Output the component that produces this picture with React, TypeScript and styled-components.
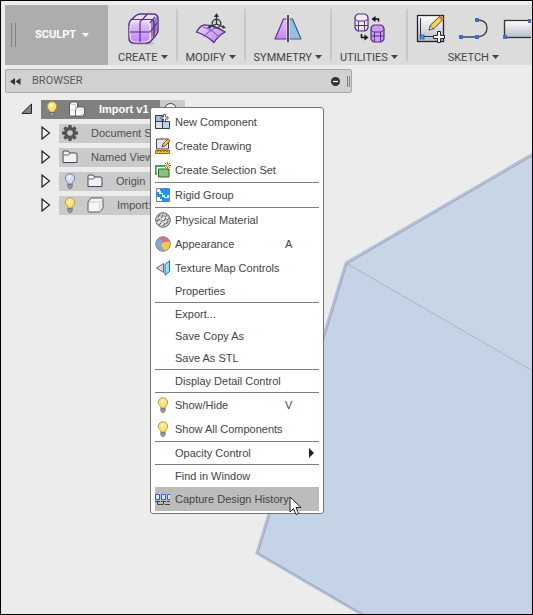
import React from "react";
import styled, { createGlobalStyle } from "styled-components";

const GlobalStyle = createGlobalStyle`
  * { box-sizing: border-box; }
  body { margin: 0; background: #ececec; }
  button { font: inherit; color: inherit; border: 0; background: none; padding: 0; cursor: default; }
  ul { list-style: none; margin: 0; padding: 0; }
  svg { display: block; flex: none; }
`;

const Window = styled.div`
  position: relative;
  display: flex;
  flex-direction: column;
  gap: 4px;
  min-height: 100vh;
  padding: 4px 0 0 4px;
  border: 1px solid #000;
  background: #ececec;
  overflow: hidden;
  font-family: "Liberation Sans", Arial, sans-serif;
  font-size: 11px;
  line-height: 14px;
  color: #444;
`;

const Model = styled.svg`
  position: absolute;
  inset: 0;
  width: 100%;
  height: 100%;
`;

const Toolbar = styled.header`
  position: relative;
  display: flex;
  height: 60px;
  background: #dcdcdc;
  overflow: hidden;
  font-family: Roboto, sans-serif;
  box-shadow: 0 -4px 0 #f0edf0;
`;

const WorkspaceButton = styled.button`
  display: flex;
  align-items: center;
  flex: none;
  width: 103px;
  padding-left: 6px;
  gap: 6px;
  background: #adadad;
  && { color: #fff; font-weight: 700; }
`;

const Grip = styled.span<{ $height: number; $gap: number }>`
  flex: none;
  width: ${(p) => p.$gap + 2}px;
  height: ${(p) => p.$height}px;
  border: solid #828282;
  border-width: 0 1px;
`;

const WorkspaceName = styled.span`
  padding-left: 13px;
`;

const Group = styled.section`
  display: flex;
  flex-direction: column;
  align-items: center;
  flex: none;
  padding: 8px 8px 0 10px;
  position: relative;
  & + &::before {
    content: "";
    position: absolute;
    left: 0;
    top: 4px;
    width: 2px;
    height: 52px;
    background: #c8c8c8;
  }
`;

const GroupTools = styled.div`
  display: flex;
  align-items: flex-start;
  flex: none;
  gap: 14px;
  height: 37px;
`;

const GroupLabel = styled.button`
  display: flex;
  align-items: center;
  flex: none;
  gap: 3px;
  height: 15px;
`;

const BrowserBar = styled.div`
  position: relative;
  display: flex;
  align-items: center;
  width: 347px;
  max-width: 100%;
  height: 24px;
  padding: 0 1px 0 4px;
  gap: 11px;
  border: 1px solid #a8a8a8;
  border-radius: 2px;
  background: #d1d1d1;
  font-family: Roboto, sans-serif;
  color: #5a5a5a;
`;

const BrowserTitle = styled.h2`
  flex: 1;
  margin: 0;
  font-size: 11px;
  font-weight: 400;
`;

const BrowserEnd = styled.div`
  display: flex;
  align-items: center;
  gap: 7px;
`;

const Tree = styled.ul`
  position: relative;
  width: 180px;
`;

const TreeRow = styled.li<{ $depth: number }>`
  display: flex;
  align-items: center;
  height: 24px;
  padding-left: ${(p) => 16 + p.$depth * 20}px;
`;

const Expander = styled.button<{ $width: number }>`
  flex: none;
  width: ${(p) => p.$width}px;
`;

const TreeNode = styled.div<{ $active?: boolean }>`
  display: flex;
  align-items: center;
  flex: none;
  gap: 9px;
  min-width: ${(p) => (p.$active ? "119px" : "110px")};
  height: 19px;
  padding: 0 3px;
  white-space: nowrap;
  background: ${(p) => (p.$active ? "#808080" : "#cacaca")};
  color: ${(p) => (p.$active ? "#fff" : "#505050")};
  font-weight: ${(p) => (p.$active ? 700 : 400)};
`;

const TreeText = styled.span`
  padding-left: 4px;
`;

const ActivateCell = styled.label`
  display: flex;
  align-items: center;
  justify-content: center;
  width: 25px;
  height: 19px;
  background: #cacaca;
`;

const ActivateRadio = styled.input`
  appearance: none;
  width: 13px;
  height: 13px;
  margin: 0 5px 0 0;
  border: 1px solid #444;
  border-radius: 50%;
  background: #f2f2f2;
`;

const Menu = styled.ul`
  position: absolute;
  left: 145px;
  top: 10px;
  width: 174px;
  && { padding: 2px 4px; }
  border: 1px solid #747474;
  border-radius: 3px;
  background: #fff;
`;

const MenuRule = styled.li`
  height: 1px;
  background: #7c7c7c;
`;

const MenuItem = styled.button<{ $compact?: boolean; $hover?: boolean }>`
  display: grid;
  grid-template-columns: 16px 1fr auto;
  align-items: center;
  column-gap: 4px;
  width: 100%;
  height: ${(p) => (p.$compact ? 22 : 24)}px;
  text-align: left;
  white-space: nowrap;
  && { background: ${(p) => (p.$hover ? "#bcbcbc" : "transparent")}; }
`;

const Shortcut = styled.kbd`
  width: 34px;
  font: inherit;
`;

const SubmenuMark = styled.span`
  padding-right: 5px;
`;

const Pointer = styled.svg`
  position: absolute;
  left: 138px;
  bottom: -3px;
  pointer-events: none;
`;

const Caret = () => (
  <svg width="7" height="5" viewBox="0 0 7 5" aria-hidden>
    <path d="M0 0h7L3.500 4z" fill="currentColor" />
  </svg>
);

const CreateIcon = () => (
  <svg width="32" height="32" viewBox="0 0 32 32">
    <defs>
      <linearGradient id="cube" x1="0" y1="0" x2="0" y2="1">
        <stop offset="0" stopColor="#dccbf0" />
        <stop offset="1" stopColor="#c184fb" />
      </linearGradient>
    </defs>
    <ellipse cx="16" cy="30.500" rx="12" ry="1.500" fill="#bbb" />
    <path d="M2 12Q2 9 4 7L9 2.500Q11 1 14 1h12q5 0 5 5v11q0 3-2 5l-5 6q-1.500 2-4 2H7q-5 0-5-5z" fill="#ecdcfb" stroke="#55317e" strokeWidth="1.500" />
    <path d="M24 10 30 4q1 7 0 14l-6 8z" fill="#a374d0" />
    <rect x="3" y="9" width="20" height="20" rx="5" fill="url(#cube)" stroke="#f0e2ff" strokeWidth="1" />
    <path d="M13 9v20M3 19h20l7-9M13 9 20 1.500M5 6.500h20Q27 8 27 10v14M23 10l5-6" stroke="#55317e" strokeWidth="1.200" fill="none" />
  </svg>
);

const ModifyIcon = () => (
  <svg width="32" height="32" viewBox="0 0 32 32">
    <defs>
      <linearGradient id="sheet" x1="0" y1="0" x2="1" y2="1">
        <stop offset="0" stopColor="#ead6ff" />
        <stop offset="1" stopColor="#bd82f2" />
      </linearGradient>
    </defs>
    <path d="M1.500 19Q6 11 11 12q8 0 19 7-7 4-11 10.500Q11 22 1.500 19z" fill="url(#sheet)" stroke="#4d2879" strokeWidth="1.300" />
    <path d="M9 24q5-7 12-9M8 14q10 3 16 10" stroke="#8c5fba" strokeWidth="1.100" fill="none" />
    <circle cx="21.500" cy="10.500" r="4.300" stroke="#444" strokeWidth="1.500" fill="none" />
    <path d="M21.500 2v9l-7 3M21.500 11l7 3" stroke="#333" strokeWidth="1.300" fill="none" />
    <path d="M21.500 0l2.500 4h-5zM12 15l3-3 1 3.500zM31 15l-3-3-1 3.500z" fill="#333" />
  </svg>
);

const SymmetryIcon = () => (
  <svg width="30" height="32" viewBox="0 0 30 32">
    <defs>
      <linearGradient id="left" x1="0" y1="0" x2="0" y2="1">
        <stop offset="0" stopColor="#e3c4fa" />
        <stop offset="1" stopColor="#c885fb" />
      </linearGradient>
    </defs>
    <path d="M10.500 6H15v20H2z" fill="url(#left)" stroke="#60328d" strokeWidth="1.200" strokeLinejoin="round" />
    <path d="M15 6h4.500L28 26H15z" fill="#9abde0" stroke="#3f5f88" strokeWidth="1.200" strokeLinejoin="round" />
    <path d="M15 2v27" stroke="#e9e9ee" strokeWidth="3" />
    <path d="M15 2v27" stroke="#000" strokeWidth="1.300" />
  </svg>
);

const UtilitiesIcon = () => (
  <svg width="32" height="32" viewBox="0 0 32 32">
    <g stroke="#59317f" strokeWidth="1.200">
      <path d="M2 5q0-3 3-4h7q3 1 3 4v9q0 3-3 4H5q-3-1-3-4z" fill="#eeeaf3" />
      <path d="M2 5.500q1 2 3 2.500h7q2-.5 3-2.500M2 12.500h13M5.500 8v10M11.500 8v10" fill="none" strokeWidth="1" />
      <path d="M18 16q0-3 3-4h7q3 1 3 4v9q0 3-3 4h-7q-3-1-3-4z" fill="#cb9df7" />
      <path d="M18 16.500q1 2 3 2.500h7q2-.5 3-2.500M18 23h13M21.500 19v10M27.500 19v10" fill="none" strokeWidth="1" />
    </g>
    <path d="M25.500 8.500V6h-4M8.500 21v3.500H12" stroke="#111" strokeWidth="1.600" fill="none" />
    <path d="M18.500 6l4-3v6zM15.500 24.500l-4-3v6z" fill="#111" />
  </svg>
);

const NewSketchIcon = () => (
  <svg width="29" height="32" viewBox="0 0 29 32">
    <defs>
      <linearGradient id="paper" x1="0" y1="0" x2="0" y2="1">
        <stop offset="0" stopColor="#fff" />
        <stop offset="1" stopColor="#b6bcca" />
      </linearGradient>
    </defs>
    <rect x="1.500" y="2.500" width="26" height="26" fill="url(#paper)" stroke="#20242a" strokeWidth="1.300" />
    <path d="M4.500 5v18.500H18" stroke="#333" fill="none" />
    <rect x="4" y="22" width="4" height="4" fill="#4a94e5" stroke="#1d5cae" strokeWidth=".8" />
    <path d="M13 17l1.500-5L24 3l3.500 3L18 15.500z" fill="#fad44b" stroke="#3c3421" strokeWidth=".9" />
    <path d="M22.500 4.500 24.500 2.500l3.500 3-2 2z" fill="#d37b4d" />
    <path d="M13 17l1.500-4 2.500 2.500z" fill="#fff" stroke="#333" strokeWidth=".6" />
    <path d="M21.500 18.500h3v4h4v3h-4v4h-3v-4h-4v-3h4z" fill="#fff" stroke="#222" />
  </svg>
);

const LineIcon = () => (
  <svg width="30" height="32" viewBox="0 0 30 32">
    <path d="M2 24h16q10-1 10-9T18 7" stroke="#444" strokeWidth="1.400" fill="none" />
    <path d="M0 22h4v4H0zM16 22h4v4h-4zM16 5h4v4h-4z" fill="#3a6fcb" />
  </svg>
);

const RectangleIcon = () => (
  <svg width="28" height="32" viewBox="0 0 28 32">
    <rect x="1.500" y="7.500" width="30" height="17" fill="url(#paper)" stroke="#333" strokeWidth="1.300" />
    <path d="M0 22h4v4H0zM25 6h4v4h-4z" fill="#3a6fcb" />
  </svg>
);

const Bulb = ({ off }: { off?: boolean }) => (
  <svg width="16" height="16" viewBox="0 0 16 16">
    <path d="M8 .7a4.600 4.600 0 0 1 2.800 8.300q-.8.800-.8 2H6q0-1.200-.8-2A4.600 4.600 0 0 1 8 .7z" fill={off ? "#cfe0fb" : "#fde476"} stroke={off ? "#6e84ad" : "#c79c30"} />
    <path d="M6 5q0-2 3-2.500Q8 4 8 6z" fill="#fff" />
    <path d="M5.700 11.500h4.600v2L9 15.500H7L5.700 13.500z" fill="#999" stroke="#555" strokeWidth=".6" />
  </svg>
);

const Opened = () => (
  <svg width="12" height="12" viewBox="0 0 12 12">
    <path d="M.8 10.500 10.500 1v9.500z" fill="#858585" stroke="#252525" />
  </svg>
);

const Closed = () => (
  <svg width="10" height="14" viewBox="0 0 10 14">
    <path d="M1 1v12l7.500-6z" fill="#f4f4f4" stroke="#222" strokeWidth="1.200" />
  </svg>
);

const AssemblyIcon = () => (
  <svg width="17" height="16" viewBox="0 0 17 16">
    <g stroke="#3c424c" strokeWidth=".8" strokeLinejoin="round">
      <path d="M.5 3.500 2.500 1H8l.5 1v11l-1.500 2H1l-.5-.5z" fill="#fff" />
      <path d="M6.500 8.500 8.500 6H15l.5 1v5.500L13.500 15H7l-.5-.5z" fill="#fff" />
    </g>
    <path d="M1 9h5.500M1 3.500h5.500v5M7 9h6v6M13 9l2-2" stroke="#c4cad5" strokeWidth=".8" fill="none" />
  </svg>
);

const GearIcon = () => (
  <svg width="16" height="16" viewBox="0 0 16 16">
    <g fill="#555">
      <path id="teeth" d="M6.500 0h3l.5 3H6zM6 13h4l-.5 3h-3zM0 6.500 3 6v4l-3-.5zM13 6l3 .5v3l-3 .5z" />
      <use href="#teeth" transform="rotate(45 8 8)" />
    </g>
    <circle cx="8" cy="8" r="4.300" fill="none" stroke="#555" strokeWidth="3" />
  </svg>
);

const FolderIcon = () => (
  <svg width="16" height="16" viewBox="0 0 16 16">
    <path d="M1 13.500V3q0-1 1-1h4l1.500 2H14l1 1v8.500z" fill="#f1f2f5" stroke="#444a54" />
    <path d="M1.500 6h5l1.500-2" fill="none" stroke="#5e6570" />
  </svg>
);

const BodyIcon = () => (
  <svg width="17" height="16" viewBox="0 0 17 16">
    <path d="M1 5l3-4h11q1 0 1 1v9l-3 4H2q-1 0-1-1z" fill="#f5f6f8" stroke="#555b65" />
    <path d="M2 5h10q1 0 1 1v9M13 5.500 16 2" fill="none" stroke="#c2c7cf" />
  </svg>
);

const NewComponentIcon = () => (
  <svg width="16" height="16" viewBox="0 0 16 16">
    <g stroke="#2e3b4a" strokeWidth="1">
      <path d="M.5 1.500h7v6h-7z" fill="#9fbfe6" />
      <path d="M.5 7.500h7v7h-7z" fill="#dae1eb" />
      <path d="M7.500 7.500h7v7h-7z" fill="#c3d2e6" />
      <path d="M8.500.5h2v2.500H13v2h-2.500V7.500h-2V5H6V3h2.500z" fill="#fff" strokeWidth=".8" />
    </g>
  </svg>
);

const DrawingIcon = () => (
  <svg width="16" height="16" viewBox="0 0 16 16">
    <path d="M1.500 1h12v10h-12z" fill="#e0e4e9" stroke="#444" />
    <path d="M.5 12.500h14v3H.5z" fill="#f5c438" stroke="#9a6b08" />
    <path d="M3 13v1M6 13v1M9 13v1M12 13v1" stroke="#805500" />
    <path d="M7 9l1-3 5-5L15 3l-5 5z" fill="#ffc83c" stroke="#493115" strokeWidth=".8" />
    <path d="M12.500 1.500l1-1L15.500 2.500l-1 1z" fill="#c5683c" />
  </svg>
);

const SelectionIcon = () => (
  <svg width="16" height="16" viewBox="0 0 16 16">
    <path d="M2 12H.8V4H10" stroke="#238023" strokeWidth="1.300" fill="none" />
    <path d="M3.500 7H14v8H3.500z" fill="#8ac17c" stroke="#246b24" />
    <path d="M12.500 0v7M9 3.500h7M10 1l5 5M15 1l-5 5" stroke="#d7421d" strokeWidth=".9" />
    <circle cx="12.500" cy="3.500" r="1.500" fill="#ffd54b" />
  </svg>
);

const RigidIcon = () => (
  <svg width="16" height="16" viewBox="0 0 16 16">
    <path d="M1.500 1.500h13v13h-13z" fill="#fff" stroke="#6c8195" />
    <path d="M5 2h9v6h-2v2h-2V8H8V6H6V4H5z" fill="#1b93fa" />
    <path d="M2 5h2v2h3v3h2v1h5v3H7v-2H5v-2H2z" fill="#1b93fa" />
  </svg>
);

const MaterialIcon = () => (
  <svg width="16" height="16" viewBox="0 0 16 16">
    <circle cx="8" cy="8" r="7.300" fill="#c6c6c6" stroke="#666" />
    <path d="M3 5l2-2M6 6l2-3M10 5l2-2M2 9l3-2M6 10l2-2M9 9l2-3M12 8l2-2M4 13l2-2M8 14l2-3M11 12l2-3" stroke="#555" />
    <path d="M4 6l2-1M7 8l2-2M10 11l1-2M5 10l-2 1M12 5v2M8 11l-1 2" stroke="#fff" strokeWidth="1.200" />
  </svg>
);

const AppearanceIcon = () => (
  <svg width="16" height="16" viewBox="0 0 16 16">
    <circle cx="8" cy="8" r="7.300" fill="#86a8d5" />
    <path d="M4 2Q8-.5 12.500 2.200 15 4 15.300 7L8 6.500z" fill="#d87578" />
    <path d="M15.300 6q.5 6-5 9L6 9q3-4 9.300-3z" fill="#f9cd3c" />
    <circle cx="8" cy="8" r="7.300" fill="none" stroke="#8b8b94" />
  </svg>
);

const TextureIcon = () => (
  <svg width="16" height="16" viewBox="0 0 16 16">
    <path d="M8.500 3.500v9L1.500 8z" fill="#d3d8dc" stroke="#666" />
    <path d="M10 4.500 14.500.8v10.700L10 15.200z" fill="#a7d6fa" stroke="#1771b7" />
  </svg>
);

const HistoryIcon = () => (
  <svg width="16" height="16" viewBox="0 0 16 16">
    <path d="M.5 3.500h4v5h-4zM6.500 3.500h4v5h-4zM15 3.500h-2.500v5H15" fill="#dbe6ff" stroke="#315fc4" />
    <path d="M0 10.500h5M6 10.500h5M12 10.500h3M2.500 11v2.500h6V11M10 13.500h5" stroke="#444" fill="none" />
  </svg>
);

type Entry = {
  label: string;
  icon?: React.ReactNode;
  shortcut?: string;
  submenu?: boolean;
  hover?: boolean;
};

const sections: Entry[][] = [
  [
    { label: "New Component", icon: <NewComponentIcon /> },
    { label: "Create Drawing", icon: <DrawingIcon /> },
    { label: "Create Selection Set", icon: <SelectionIcon /> },
  ],
  [{ label: "Rigid Group", icon: <RigidIcon /> }],
  [
    { label: "Physical Material", icon: <MaterialIcon /> },
    { label: "Appearance", icon: <AppearanceIcon />, shortcut: "A" },
    { label: "Texture Map Controls", icon: <TextureIcon /> },
    { label: "Properties" },
  ],
  [{ label: "Export..." }, { label: "Save Copy As" }, { label: "Save As STL" }],
  [{ label: "Display Detail Control" }],
  [
    { label: "Show/Hide", icon: <Bulb />, shortcut: "V" },
    { label: "Show All Components", icon: <Bulb /> },
  ],
  [{ label: "Opacity Control", submenu: true }],
  [
    { label: "Find in Window" },
    { label: "Capture Design History", icon: <HistoryIcon />, hover: true },
  ],
];

const groups = [
  { label: "CREATE", tools: [CreateIcon] },
  { label: "MODIFY", tools: [ModifyIcon] },
  { label: "SYMMETRY", tools: [SymmetryIcon] },
  { label: "UTILITIES", tools: [UtilitiesIcon] },
  { label: "SKETCH", tools: [NewSketchIcon, LineIcon, RectangleIcon] },
];

const nodes = [
  { label: "Document Settings", icons: [<GearIcon key="gear" />] },
  { label: "Named Views", icons: [<FolderIcon key="folder" />] },
  { label: "Origin", icons: [<Bulb off key="bulb" />, <FolderIcon key="folder" />] },
  { label: "Import:1", icons: [<Bulb key="bulb" />, <BodyIcon key="body" />] },
];

const ContextMenu = () => (
  <Menu>
    {sections.map((entries, s) => (
      <React.Fragment key={s}>
        {s > 0 && <MenuRule role="separator" />}
        {entries.map((e) => (
          <li key={e.label}>
            <MenuItem $compact={!e.icon} $hover={e.hover}>
              <span>{e.icon}</span>
              <span>{e.label}</span>
              {e.shortcut && <Shortcut>{e.shortcut}</Shortcut>}
              {e.submenu && (
                <SubmenuMark>
                  <svg width="5" height="10" viewBox="0 0 5 10"><path d="M0 0v10l5-5z" fill="#222" /></svg>
                </SubmenuMark>
              )}
            </MenuItem>
          </li>
        ))}
      </React.Fragment>
    ))}
    <Pointer width="13" height="20" viewBox="0 0 13 20">
      <path d="M1 1v15l3.500-3.500L7 18.500l2.500-1L7 11.500h5z" fill="#fff" stroke="#222" />
    </Pointer>
  </Menu>
);

export default function App() {
  return (
    <>
      <GlobalStyle />
      <Window>
        <Model aria-hidden>
          <path d="M345 262 1345-321V1189L256 552z" fill="#c4d3e6" />
          <path d="M345 262 1345-321V840z" fill="#c8d5e6" />
          <path d="M345 262 1345 840" stroke="#a6b6ca" />
          <path d="M1345-321 345 262 256 552 1345 1189" fill="none" stroke="#b5bfd8" strokeWidth="3" />
          <path d="M1345-320 346 263 257 552 1345 1188" fill="none" stroke="#9ba9c6" strokeWidth="1" />
        </Model>

        <Toolbar>
          <WorkspaceButton>
            <Grip $height={24} $gap={3} />
            <WorkspaceName>SCULPT</WorkspaceName>
            <Caret />
          </WorkspaceButton>
          {groups.map((g) => (
            <Group key={g.label}>
              <GroupTools>
                {g.tools.map((Tool, i) => (
                  <button key={i} aria-label={`${g.label} ${i + 1}`}><Tool /></button>
                ))}
              </GroupTools>
              <GroupLabel>
                {g.label}
                <Caret />
              </GroupLabel>
            </Group>
          ))}
        </Toolbar>

        <BrowserBar>
          <button aria-label="Collapse browser">
            <svg width="11" height="7" viewBox="0 0 11 7"><path d="M5 0v7L0 3.500zM10.500 0v7L5.500 3.500z" fill="#333" /></svg>
          </button>
          <BrowserTitle>BROWSER</BrowserTitle>
          <BrowserEnd>
            <button aria-label="Minimize">
              <svg width="9" height="9" viewBox="0 0 9 9"><circle cx="4.500" cy="4.500" r="4.500" fill="#333" /><path d="M2 4.500h5" stroke="#fff" strokeWidth="1.200" /></svg>
            </button>
            <Grip $height={11} $gap={1} />
          </BrowserEnd>
        </BrowserBar>

        <Tree>
          <TreeRow $depth={0}>
            <Expander $width={20} aria-label="Collapse"><Opened /></Expander>
            <TreeNode $active>
              <Bulb />
              <AssemblyIcon />
              <TreeText>Import v1</TreeText>
            </TreeNode>
            <ActivateCell>
              <ActivateRadio type="radio" name="active" aria-label="Activate Import v1" />
            </ActivateCell>
          </TreeRow>
          {nodes.map((n) => (
            <TreeRow key={n.label} $depth={1}>
              <Expander $width={18} aria-label="Expand"><Closed /></Expander>
              <TreeNode>
                {n.icons}
                <TreeText>{n.label}</TreeText>
              </TreeNode>
            </TreeRow>
          ))}
          <ContextMenu />
        </Tree>
      </Window>
    </>
  );
}
